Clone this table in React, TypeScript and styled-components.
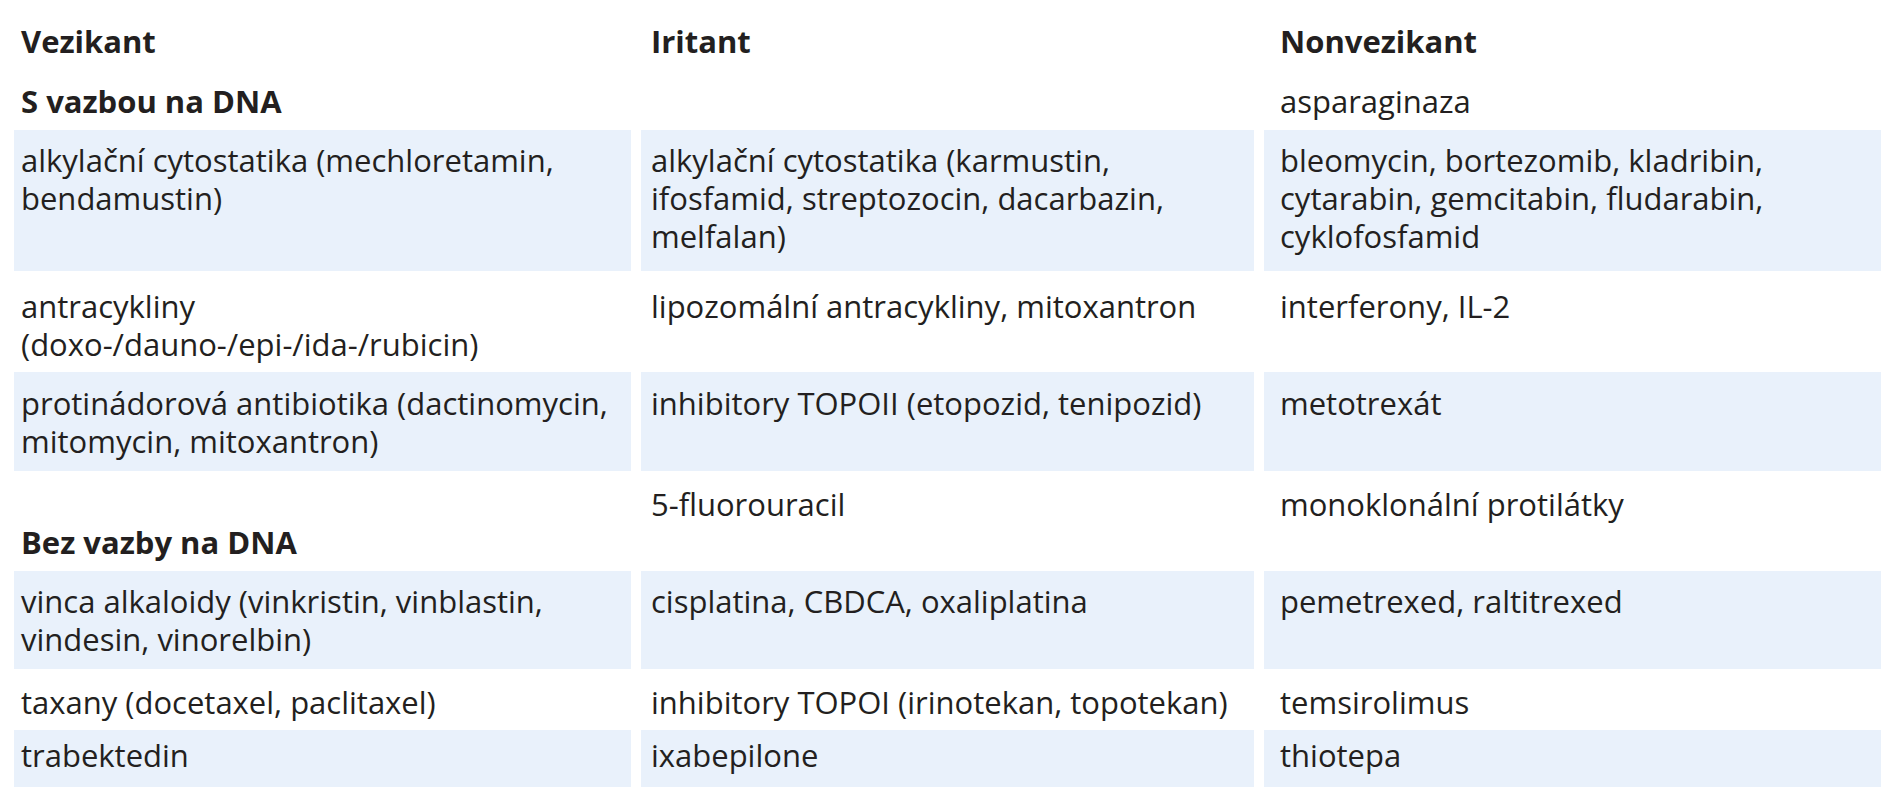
import React from 'react';
import styled, { createGlobalStyle } from 'styled-components';

const GlobalStyle = createGlobalStyle`
  * {
    box-sizing: border-box;
  }
  body {
    margin: 0;
    background: #ffffff;
    font-family: 'Open Sans', 'Liberation Sans', sans-serif;
    color: #231f20;
  }
`;

const Grid = styled.div`
  display: grid;
  grid-template-columns: 617px 613px 617px;
  column-gap: 10px;
  row-gap: 4px;
  padding: 12px 0 0 14px;
  font-size: 31px;
  line-height: 38px;
`;

const Cell = styled.div<{ $shaded?: boolean; $pt: number; $pb: number; $pl: number }>`
  padding: ${(p) => p.$pt}px 4px ${(p) => p.$pb}px ${(p) => p.$pl}px;
  background: ${(p) => (p.$shaded ? '#e9f1fb' : 'transparent')};
  white-space: nowrap;
`;

const Line = styled.div<{ $bold?: boolean }>`
  font-weight: ${(p) => (p.$bold ? 700 : 400)};
  min-height: 38px;
`;

type Row = {
  shaded?: boolean;
  pt: number;
  pb: number;
  bold?: boolean[];
  cells: string[][];
};

const padLeft = [7, 10, 16];

const rows: Row[] = [
  { pt: 10, pb: 8, bold: [true, true, true], cells: [['Vezikant'], ['Iritant'], ['Nonvezikant']] },
  { pt: 10, pb: 6, bold: [true, false, false], cells: [['S vazbou na DNA'], [], ['asparaginaza']] },
  {
    shaded: true,
    pt: 11,
    pb: 16,
    cells: [
      ['alkylační cytostatika (mechloretamin,', 'bendamustin)'],
      ['alkylační cytostatika (karmustin,', 'ifosfamid, streptozocin, dacarbazin,', 'melfalan)'],
      ['bleomycin, bortezomib, kladribin,', 'cytarabin, gemcitabin, fludarabin,', 'cyklofosfamid'],
    ],
  },
  {
    pt: 12,
    pb: 5,
    cells: [
      ['antracykliny', '(doxo-/dauno-/epi-/ida-/rubicin)'],
      ['lipozomální antracykliny, mitoxantron'],
      ['interferony, IL-2'],
    ],
  },
  {
    shaded: true,
    pt: 12,
    pb: 11,
    cells: [
      ['protinádorová antibiotika (dactinomycin,', 'mitomycin, mitoxantron)'],
      ['inhibitory TOPOII (etopozid, tenipozid)'],
      ['metotrexát'],
    ],
  },
  {
    pt: 10,
    pb: 6,
    cells: [['', 'Bez vazby na DNA'], ['5-fluorouracil'], ['monoklonální protilátky']],
  },
  {
    shaded: true,
    pt: 11,
    pb: 11,
    cells: [
      ['vinca alkaloidy (vinkristin, vinblastin,', 'vindesin, vinorelbin)'],
      ['cisplatina, CBDCA, oxaliplatina'],
      ['pemetrexed, raltitrexed'],
    ],
  },
  {
    pt: 10,
    pb: 5,
    cells: [['taxany (docetaxel, paclitaxel)'], ['inhibitory TOPOI (irinotekan, topotekan)'], ['temsirolimus']],
  },
  { shaded: true, pt: 6, pb: 13, cells: [['trabektedin'], ['ixabepilone'], ['thiotepa']] },
];

const App = () => {
  return (
    <>
      <GlobalStyle />
      <Grid>
        {rows.map((row, i) =>
          row.cells.map((lines, j) => (
            <Cell key={`${i}-${j}`} $shaded={row.shaded} $pt={row.pt} $pb={row.pb} $pl={padLeft[j]}>
              {lines.map((text, k) => (
                <Line key={k} $bold={row.bold ? row.bold[j] : text === 'Bez vazby na DNA'}>
                  {text}
                </Line>
              ))}
            </Cell>
          ))
        )}
      </Grid>
    </>
  );
};

export default App;
